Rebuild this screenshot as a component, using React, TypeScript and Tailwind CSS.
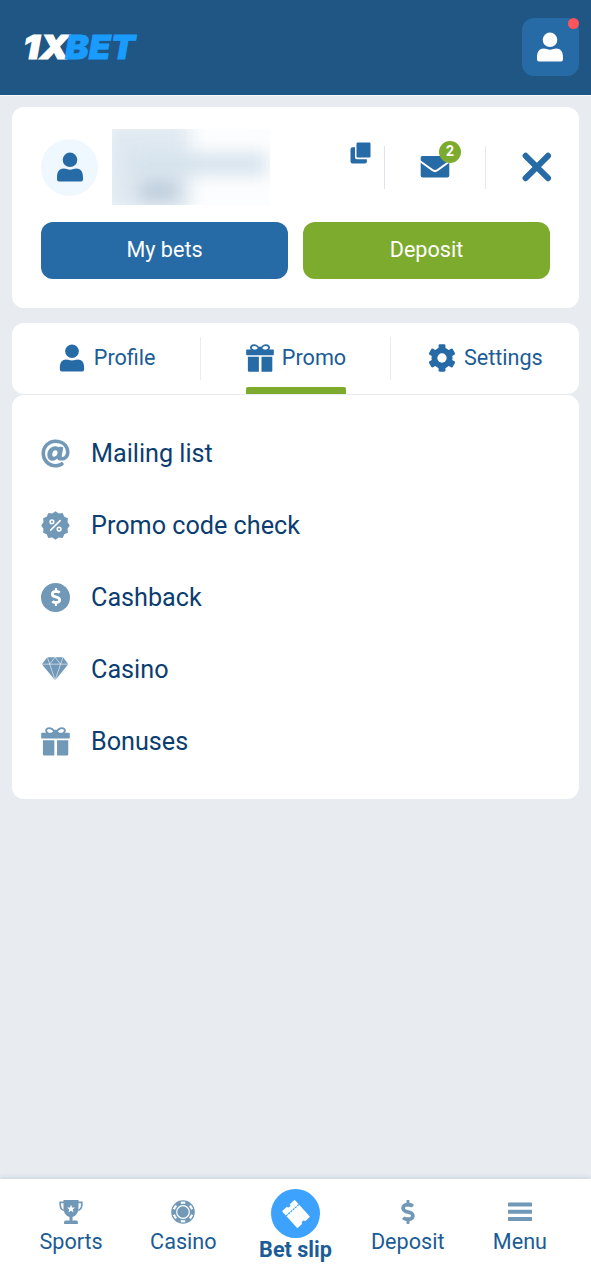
import React, { useState } from 'react';
import { FaAt, FaDollarSign } from 'react-icons/fa';

type IconProps = { className?: string };

const UserIcon = ({ className }: IconProps) => (
  <svg viewBox="0 0 30 30" className={className} fill="currentColor">
    <circle cx="15" cy="7.8" r="7.3" />
    <path d="M2 25.2C2 19.800 4.500 16.600 8.800 16.600c2.200 0 3.600 1.100 6.200 1.100S19 16.600 21.200 16.600c4.300 0 6.800 3.200 6.800 8.600v2.200a2 2 0 0 1-2 2H4a2 2 0 0 1-2-2z" />
  </svg>
);

const GiftIcon = ({ className }: IconProps) => (
  <svg viewBox="0 0 30 30" className={className} fill="currentColor">
    <path
      d="M15 6.500C13 2 9.500.500 7 1.500 4.300 2.700 5 5.500 7.500 6.600M15 6.500C17 2 20.500.500 23 1.500c2.700 1.200 2 4-.5 5.100M11.500 6.600 15 3.800l3.500 2.800"
      fill="none"
      stroke="currentColor"
      strokeWidth="2"
    />
    <rect x="0.200" y="6" width="29.600" height="6" rx="0.800" />
    <path d="M2 13.600h11.800v16H3.300A1.300 1.300 0 0 1 2 28.300zM16.600 13.600H28.200v14.700a1.300 1.300 0 0 1-1.300 1.300H16.600z" />
  </svg>
);

const GearIcon = ({ className }: IconProps) => (
  <svg viewBox="0 0 30 30" className={className}>
    <g fill="currentColor">
      <circle cx="15" cy="15" r="11.300" />
      {[0, 60, 120].map((a) => (
        <rect key={a} x="11.300" y="0.300" width="7.400" height="29.400" rx="1.500" transform={`rotate(${a} 15 15)`} />
      ))}
    </g>
    <circle cx="15" cy="15" r="5" fill="#fff" />
  </svg>
);

const CopyIcon = ({ className }: IconProps) => (
  <svg viewBox="0 0 21 22" className={className} fill="currentColor">
    <rect x="6.500" y="0.500" width="14" height="15" rx="1.200" />
    <path d="M5 5.200V15.200a2 2 0 0 0 2 2h9.900v2.300a2 2 0 0 1-2 2H2.500a2 2 0 0 1-2-2V7.200a2 2 0 0 1 2-2z" />
  </svg>
);

const MailIcon = ({ className }: IconProps) => (
  <svg viewBox="0 0 30 22" className={className} fill="currentColor">
    <path d="M2.500 0h25A1.800 1.800 0 0 1 29.300 2v2.500L17 13.300a3.400 3.400 0 0 1-4 0L.700 4.500V2A1.800 1.800 0 0 1 2.500 0z" />
    <path d="M.700 6.800 12 15a5 5 0 0 0 6 0L29.300 6.800v12.800a2 2 0 0 1-2 2H2.700a2 2 0 0 1-2-2z" />
  </svg>
);

const CloseIcon = ({ className }: IconProps) => (
  <svg viewBox="0 0 30 30" className={className} stroke="currentColor" strokeWidth="6" strokeLinecap="round">
    <path d="M3.600 3.800 26 26.200M26 3.800 3.600 26.200" />
  </svg>
);

const sealPoints = Array.from({ length: 24 }, (_, i) => {
  const r = i % 2 === 0 ? 14.8 : 12.9;
  const a = (i * Math.PI) / 12 - Math.PI / 2;
  return `${15 + r * Math.cos(a)},${15 + r * Math.sin(a)}`;
}).join(' ');

const PromoIcon = ({ className }: IconProps) => (
  <svg viewBox="0 0 30 30" className={className}>
    <polygon points={sealPoints} fill="currentColor" />
    <g fill="none" stroke="#fff" strokeWidth="1.600" strokeLinecap="round">
      <path d="M19.800 10 10 19.800" />
      <circle cx="11.300" cy="11.200" r="1.900" />
      <circle cx="18.700" cy="18.700" r="1.900" />
    </g>
  </svg>
);

const CashbackIcon = ({ className }: IconProps) => (
  <span className={`${className} flex items-center justify-center rounded-full bg-[#7298b8]`}>
    <FaDollarSign className="h-[18px] w-[18px] text-white" />
  </span>
);

const DiamondIcon = ({ className }: IconProps) => (
  <svg viewBox="0 0 30 30" className={className}>
    <path d="M6.500 2.200h16.300L28.200 9.500 14.600 26 .900 9.500z" fill="currentColor" />
    <path d="M.900 9.500h27.300M6.500 2.200 9 9.500l5.600 16.500L20.300 9.500l2.500-7.300M9 9.500l5.600-7.300L20.300 9.500" fill="none" stroke="#fff" strokeWidth="0.600" />
  </svg>
);

const TrophyIcon = ({ className }: IconProps) => (
  <svg viewBox="0 0 24 24" className={className}>
    <path d="M5.500 2.400H1.200V5c0 3 1.500 5 4.500 5.500M18.500 2.400h4.300V5c0 3-1.500 5-4.500 5.500" fill="none" stroke="currentColor" strokeWidth="1.700" />
    <path d="M4.500 0h15v7c0 5-1.700 8.300-5 9.500-.8.300-1 .8-1 1.500v2.500h3.900a1.500 1.500 0 0 1 1.500 1.500v2H5.100v-2a1.500 1.500 0 0 1 1.500-1.500h3.900V18c0-.7-.2-1.200-1-1.500C6.200 15.300 4.500 12 4.500 7z" fill="currentColor" />
    <path d="m12 4.800 1.100 2.600 2.800.2-2.100 1.900.6 2.700-2.400-1.400-2.400 1.400.6-2.700-2.100-1.900 2.800-.2z" fill="#fff" />
  </svg>
);

const ChipIcon = ({ className }: IconProps) => (
  <svg viewBox="0 0 24 24" className={className} fill="none">
    <circle cx="12" cy="12" r="11.800" fill="currentColor" />
    {[0, 60, 120, 180, 240, 300].map((a) => (
      <rect key={a} x="9.800" y="1.600" width="4.400" height="2.200" fill="#fff" transform={`rotate(${a} 12 12)`} />
    ))}
    <circle cx="12" cy="12" r="6.300" stroke="#fff" strokeWidth="1.200" />
  </svg>
);

const TicketIcon = ({ className }: IconProps) => (
  <svg viewBox="0 0 28 28" className={className}>
    <g transform="rotate(48 14 14)">
      <path d="M2.500 6.500a1 1 0 0 1 1-1h21a1 1 0 0 1 1 1v5.600a1.900 1.900 0 0 0 0 3.800v5.600a1 1 0 0 1-1 1h-21a1 1 0 0 1-1-1v-5.600a1.900 1.900 0 0 0 0-3.800z" fill="#fff" />
      <path d="M8.800 5.500v17" stroke="#3da2fd" strokeWidth="1.200" strokeDasharray="2.200 0.800" />
    </g>
  </svg>
);

const MenuIcon = ({ className }: IconProps) => (
  <svg viewBox="0 0 24 24" className={className} fill="currentColor">
    <rect y="2.500" width="24" height="4" rx="0.500" />
    <rect y="9.800" width="24" height="4" rx="0.500" />
    <rect y="17" width="24" height="4" rx="0.500" />
  </svg>
);

const Logo = () => (
  <svg viewBox="0 0 114 26" className="h-[26px] w-[114px] overflow-visible font-[Inter,sans-serif] text-[33px] font-black italic">
    <text x="-1" y="24.500" textLength="46" lengthAdjust="spacingAndGlyphs" fill="#fff" stroke="#fff" strokeWidth="1">1X</text>
    <text x="41" y="24.500" textLength="70" lengthAdjust="spacingAndGlyphs" fill="#1a9cff" stroke="#1a9cff" strokeWidth="0.800">BET</text>
  </svg>
);

const tabs = [
  { id: 'profile', label: 'Profile', icon: UserIcon },
  { id: 'promo', label: 'Promo', icon: GiftIcon },
  { id: 'settings', label: 'Settings', icon: GearIcon },
];

const promoItems = [
  { label: 'Mailing list', icon: FaAt },
  { label: 'Promo code check', icon: PromoIcon },
  { label: 'Cashback', icon: CashbackIcon },
  { label: 'Casino', icon: DiamondIcon },
  { label: 'Bonuses', icon: GiftIcon },
];

const navItems = [
  { label: 'Sports', icon: TrophyIcon },
  { label: 'Casino', icon: ChipIcon },
  { label: 'Bet slip', icon: TicketIcon, main: true },
  { label: 'Deposit', icon: FaDollarSign },
  { label: 'Menu', icon: MenuIcon },
];

export default function App() {
  const [activeTab, setActiveTab] = useState('promo');

  return (
    <div className="flex h-[1280px] w-full flex-col overflow-hidden bg-[#e8ecf1] font-[Roboto,sans-serif] text-[#1b5c96]">
      {/* Header */}
      <header className="flex h-[95px] shrink-0 items-center justify-between bg-[#205683] pr-3 pb-px pl-6">
        <Logo />
        <button className="relative flex h-[58px] w-[57px] items-center justify-center rounded-xl bg-[#266aa6] pr-px text-white">
          <UserIcon className="h-[30px] w-[30px]" />
          <span className="absolute top-0 right-0 h-[11px] w-[11px] rounded-full bg-[#ff545c]" />
        </button>
      </header>

      <main className="flex-1 border-t border-[#f6f8fa] px-3 pt-[11px]">
        {/* Account card */}
        <section className="h-[201px] rounded-xl bg-white px-[29px] pt-[22px]">
          <div className="flex h-[76px] items-center text-[#266aa6]">
            <div className="flex h-[57px] w-[57px] items-center justify-center rounded-full bg-[#f0f8ff]">
              <UserIcon className="h-[30px] w-[30px]" />
            </div>
            {/* Hidden account name and balance */}
            <div className="relative ml-3.5 h-[76px] w-[158px] overflow-hidden bg-[#fcfdfe]">
              <div className="absolute -top-2 -left-2 h-[92px] w-[86px] bg-[#e0e9f1] blur-[9px]" />
              <div className="absolute top-[24px] left-4 h-[22px] w-[138px] bg-[#d6e3ed] blur-[8px]" />
              <div className="absolute top-[54px] left-[28px] h-[16px] w-[38px] bg-[#b4c6d6] blur-[9px]" />
            </div>
            <CopyIcon className="mb-7 ml-20 h-[22px] w-[21px]" />
            <div className="ml-[13px] h-[43px] w-px bg-[#dde4ea]" />
            <button className="relative ml-[35px]">
              <MailIcon className="h-[22px] w-[30px]" />
              <span className="absolute -top-[15px] -right-[11px] flex h-[22px] w-[22px] items-center justify-center rounded-full bg-[#7dab2e] pb-0.5 text-[14px] font-bold text-white">
                2
              </span>
            </button>
            <div className="ml-[35px] h-[43px] w-px bg-[#e3e8ed]" />
            <button className="-mr-[2px] ml-auto">
              <CloseIcon className="h-[30px] w-[30px]" />
            </button>
          </div>
          <div className="mt-[17px] flex gap-[15px] text-[21.6px] text-white">
            <button className="h-[57px] flex-1 rounded-xl bg-[#266aa6] pb-px">My bets</button>
            <button className="h-[57px] flex-1 rounded-xl bg-[#7dab2e] pb-px">Deposit</button>
          </div>
        </section>

        {/* Tabs */}
        <nav className="mt-[15px] flex h-[71px] items-center divide-x divide-[#e8edf2] rounded-xl bg-white text-[21.6px]">
          {tabs.map(({ id, label, icon: Icon }) => (
            <button key={id} onClick={() => setActiveTab(id)} className="flex h-[43px] flex-1 justify-center pl-px">
              <span className="relative flex h-[43px] items-center gap-2 pb-0.5">
                <Icon className="h-7 w-7 text-[#266aa6]" />
                <span className="pt-0.5">{label}</span>
                {activeTab === id && (
                  <span className="absolute -bottom-3.5 left-0 h-[7px] w-full rounded-t-[2px] bg-[#7dab2e]" />
                )}
              </span>
            </button>
          ))}
        </nav>

        {/* Promo list */}
        <ul className="mt-px h-[404px] rounded-xl bg-white px-[29px] pt-[22px]">
          {promoItems.map(({ label, icon: Icon }) => (
            <li key={label} className="flex h-[72px] items-center gap-[21px] text-[25.2px] text-[#0c3d70]">
              <Icon className="h-[29px] w-[29px] text-[#7298b8]" />
              <span className="pt-0.5">{label}</span>
            </li>
          ))}
        </ul>
      </main>

      {/* Bottom navigation */}
      <nav className="flex h-[101px] shrink-0 bg-white px-[15px] text-[21.6px] shadow-[0_-1px_5px_rgba(60,100,140,0.2)]">
        {navItems.map(({ label, icon: Icon, main }) =>
          main ? (
            <button key={label} className="flex flex-1 flex-col items-center pt-2.5 font-bold">
              <span className="flex h-[49px] w-[49px] items-center justify-center rounded-full bg-[#3da2fd]">
                <Icon className="h-[28px] w-[28px]" />
              </span>
              <span className="leading-6">{label}</span>
            </button>
          ) : (
            <button key={label} className="flex flex-1 flex-col items-center pt-[21px]">
              <Icon className="h-6 w-6 text-[#7298b8]" />
              <span className="mt-1.5 leading-6">{label}</span>
            </button>
          )
        )}
      </nav>
    </div>
  );
}
